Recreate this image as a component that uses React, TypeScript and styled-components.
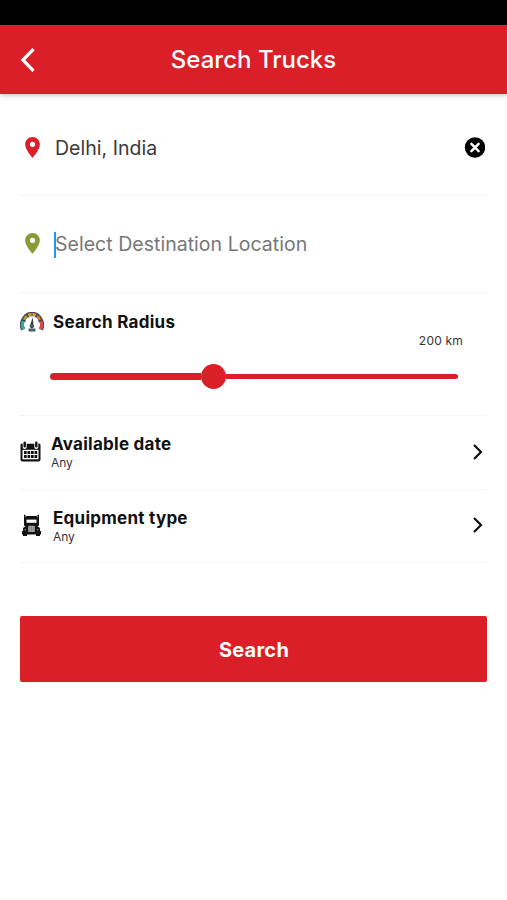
import React from "react";
import styled, { createGlobalStyle } from "styled-components";

const RED = "#da1f28";

const GlobalStyle = createGlobalStyle`
  * { box-sizing: border-box; }
  body { margin: 0; background: #fff; font-family: Inter, "Liberation Sans", sans-serif; }
`;

const Screen = styled.div`
  display: flex;
  flex-direction: column;
  width: 100%;
  height: 900px;
  background: #fff;
  overflow: hidden;
`;

const StatusBar = styled.div`
  height: 25px;
  flex: none;
  background: #000;
`;

const Header = styled.header`
  display: grid;
  grid-template-columns: 56px 1fr 56px;
  align-items: center;
  flex: none;
  height: 69px;
  background: ${RED};
  box-shadow: 0 1px 5px rgba(0, 0, 0, 0.28);
`;

const IconButton = styled.button<{ $pad?: string }>`
  display: flex;
  padding: ${(p) => p.$pad ?? "0"};
  border: 0;
  background: none;
`;

const Title = styled.h1`
  margin: 0;
  text-align: center;
  color: #fff;
  font-size: 24px;
  line-height: 30px;
  font-weight: 500;
  letter-spacing: 0.02px;
`;

const Content = styled.main`
  display: flex;
  flex-direction: column;
  padding: 7px 20px 0;
`;

const LocationRow = styled.div<{ $height: number }>`
  display: flex;
  align-items: center;
  height: ${(p) => p.$height}px;
  padding: 0 2px 0 5px;
  border-bottom: 1px solid #f3f3f3;
`;

const LocationText = styled.span<{ $muted?: boolean }>`
  flex: 1;
  margin-left: ${(p) => (p.$muted ? "-1px" : "15px")};
  color: ${(p) => (p.$muted ? "#777" : "#3a3a3a")};
  font-size: 19.5px;
  line-height: 26px;
  letter-spacing: 0.03px;
`;

const Caret = styled.span`
  width: 2px;
  height: 26px;
  margin: 2px 0 0 14px;
  background: #2196f3;
`;

const RadiusSection = styled.section`
  display: flex;
  flex-direction: column;
  height: 123px;
  padding-top: 18px;
  border-bottom: 1px solid #f5f5f5;
`;

const RadiusHeading = styled.div`
  display: flex;
  align-items: center;
  gap: 9px;
  height: 22px;
`;

const Label = styled.div`
  color: #111;
  font-size: 17px;
  line-height: 22px;
  font-weight: 700;
  letter-spacing: 0.26px;
`;

const Value = styled.div<{ $right?: boolean }>`
  color: #333;
  font-size: 12px;
  line-height: 16px;
  letter-spacing: ${(p) => (p.$right ? "0.2px" : "-0.1px")};
  ${(p) => p.$right && "align-self: flex-end; margin-right: 24px;"}
`;

const Slider = styled.div`
  display: flex;
  align-items: center;
  height: 26px;
  margin: 14px 29px 0 30px;
`;

const ActiveTrack = styled.div`
  width: 151px;
  height: 7px;
  border-radius: 4px 0 0 4px;
  background: ${RED};
`;

const Thumb = styled.div`
  width: 25px;
  height: 25px;
  border-radius: 50%;
  background: ${RED};
`;

const InactiveTrack = styled.div`
  flex: 1;
  height: 5px;
  border-radius: 0 3px 3px 0;
  background: ${RED};
`;

const OptionRow = styled.div<{ $height: number }>`
  display: grid;
  grid-template-columns: auto 1fr auto;
  column-gap: 10px;
  align-items: center;
  height: ${(p) => p.$height}px;
  padding: 0 4px 2px 0;
  border-bottom: 1px solid #f7f7f7;
`;

const OptionText = styled.div`
  padding-top: 1px;
`;

const SearchButton = styled.button`
  height: 66px;
  margin-top: 53px;
  padding: 2px 0 0 1px;
  border: 0;
  border-radius: 2px;
  background: ${RED};
  color: #fff;
  font: 700 20px/26px Inter, "Liberation Sans", sans-serif;
  letter-spacing: 0.25px;
`;

const PinIcon = styled.svg`
  flex: none;
  margin-bottom: 2px;
`;

const Pin = ({ color }: { color: string }) => (
  <PinIcon width="15" height="21" viewBox="5 2 14 20">
    <path fill={color} fillRule="evenodd" d="M12 2C8.13 2 5 5.13 5 9c0 5.25 7 13 7 13s7-7.75 7-13c0-3.87-3.13-7-7-7zm0 9.5a2.5 2.5 0 1 1 0-5 2.5 2.5 0 0 1 0 5z" />
  </PinIcon>
);

const BackIcon = () => (
  <svg width="16" height="26" viewBox="0 0 16 26" fill="none" stroke="#fff" strokeWidth="3.3">
    <path d="M14.500 2.200 3.900 13l10.600 10.800" />
  </svg>
);

const ClearIcon = () => (
  <svg width="21" height="21" viewBox="0 0 21 21">
    <circle cx="11" cy="10.5" r="10.2" fill="#000" />
    <path d="m7.400 6.900 7.200 7.200m0-7.200-7.200 7.200" stroke="#fff" strokeWidth="2.5" strokeLinecap="round" />
  </svg>
);

const Chevron = () => (
  <svg width="11" height="18" viewBox="0 0 11 18" fill="none" stroke="#111" strokeWidth="2.2">
    <path d="m2 2 7 7-7 7" />
  </svg>
);

const GaugeIcon = () => (
  <svg width="24" height="20" viewBox="0 0 24 20" fill="none">
    <path d="M3.200 17.500A9.300 9.300 0 0 1 3.200 8Q6 1.900 12 1.900T20.800 8a9.300 9.300 0 0 1 0 9.500" stroke="#4a464a" strokeWidth="4.200" />
    <path d="M3.300 17A9 9 0 0 1 3.200 9.200" stroke="#2fa99b" strokeWidth="3.200" />
    <path d="M4 8Q5 5.500 7 4.200" stroke="#a99b4e" strokeWidth="2.600" />
    <path d="M8 3.300Q12 1.200 16 3.300" stroke="#dba841" strokeWidth="2.500" />
    <path d="M17 4.200Q19 5.500 20 8" stroke="#d8783c" strokeWidth="2.600" />
    <path d="M20.800 9.200a9 9 0 0 1-.1 7.800" stroke="#d94b45" strokeWidth="3.200" />
    <path d="m3 8 3 1.400M7.200 2.500l1.500 3M12 1v3.300M16.800 2.500l-1.500 3M21 8l-3 1.400" stroke="#39343a" strokeWidth=".8" />
    <path d="m12.700 5.200-2.300 7.200a2.200 2.200 0 1 0 3 0z" fill="#333b3e" />
    <circle cx="12" cy="13.700" r=".8" fill="#aaa" />
    <rect x="8.600" y="16.600" width="6.800" height="2.800" rx="1" fill="#34494b" />
    <path d="M10 18h4" stroke="#62aaa0" strokeWidth=".8" />
  </svg>
);

const CalendarIcon = () => (
  <svg width="21" height="21" viewBox="0 0 21 21">
    <path d="M2 2.500h17q1.500 0 1.500 1.500v14.500q0 2-2 2h-16q-2 0-2-2V4Q.5 2.500 2 2.500z" fill="#111" />
    <path d="M2.500 8.800h16v9.500h-16z" fill="#fff" />
    <path d="M2.700 1h4v5a2 2 0 0 1-4 0zM14.300 1h4v5a2 2 0 0 1-4 0z" fill="#fff" />
    <path d="M6.700 0h7.600v2.500H6.700z" fill="#fff" />
    <rect x="3.500" y=".5" width="2.400" height="6" rx="1.200" fill="#111" />
    <rect x="15.100" y=".5" width="2.400" height="6" rx="1.200" fill="#111" />
    <path d="M4 10h2.700v2.900H4zm3.500 0h2.700v2.900H7.500zm3.500 0h2.700v2.900H11zm3.500 0h2.700v2.900h-2.700zM4 14h2.700v2.900H4zm3.500 0h2.700v2.900H7.500zm3.500 0h2.700v2.900H11zm3.500 0h2.700v2.900h-2.700z" fill="#111" />
  </svg>
);

const TruckIcon = () => (
  <svg width="23" height="23" viewBox="0 0 23 23">
    <path d="M4 .8h1.500v11H4zm13.500 0H19v11h-1.500z" fill="#111" />
    <path d="M6.500 1.900h10l1.500 1.600V12H5V3.500z" fill="#111" />
    <path d="M6.500 5.600h10v3.200h-10z" fill="#fff" />
    <path d="M6 9.800h11l.8 2.600q2.200.6 2.200 2.300V17h1v3.500h-1V22h-4v-1.500H7V22H3v-1.500H2V17h1v-2.300q0-1.700 2.200-2.300z" fill="#111" />
    <rect x="8.200" y="11.700" width="6.600" height="6.300" rx=".8" fill="#aaa" />
    <path d="M9.900 12v5.700M11.500 12v5.700M13.100 12v5.700" stroke="#777" strokeWidth=".7" />
    <circle cx="5.300" cy="15.800" r=".7" fill="#999" />
    <circle cx="17.700" cy="15.800" r=".7" fill="#999" />
  </svg>
);

const options = [
  { label: "Available date", value: "Any", Icon: CalendarIcon, height: 74 },
  { label: "Equipment type", value: "Any", Icon: TruckIcon, height: 73 },
];

export default function App() {
  return (
    <Screen>
      <GlobalStyle />
      <StatusBar />
      <Header>
        <IconButton $pad="0 0 0 19px" aria-label="Back"><BackIcon /></IconButton>
        <Title>Search Trucks</Title>
      </Header>
      <Content>
        <LocationRow $height={95}>
          <Pin color={RED} />
          <LocationText>Delhi, India</LocationText>
          <IconButton $pad="0 0 2px" aria-label="Clear"><ClearIcon /></IconButton>
        </LocationRow>
        <LocationRow $height={97}>
          <Pin color="#8a9a35" />
          <Caret />
          <LocationText $muted>Select Destination Location</LocationText>
        </LocationRow>
        <RadiusSection>
          <RadiusHeading>
            <GaugeIcon />
            <Label>Search Radius</Label>
          </RadiusHeading>
          <Value $right>200 km</Value>
          <Slider>
            <ActiveTrack />
            <Thumb />
            <InactiveTrack />
          </Slider>
        </RadiusSection>
        {options.map(({ label, value, Icon, height }) => (
          <OptionRow key={label} $height={height}>
            <Icon />
            <OptionText>
              <Label>{label}</Label>
              <Value>{value}</Value>
            </OptionText>
            <Chevron />
          </OptionRow>
        ))}
        <SearchButton>Search</SearchButton>
      </Content>
    </Screen>
  );
}
